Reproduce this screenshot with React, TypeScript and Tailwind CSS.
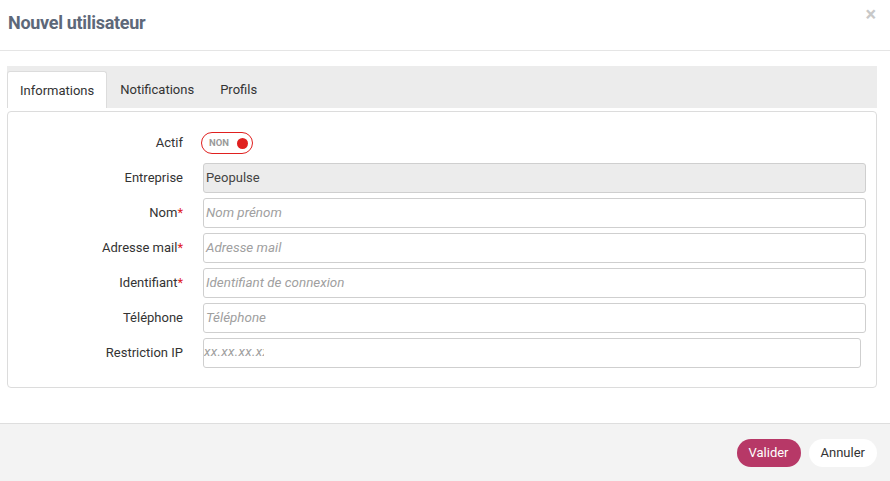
import React, { useState } from 'react';

type Field = {
  label: string;
  required?: boolean;
  placeholder?: string;
  value?: string;
  disabled?: boolean;
};

const fields: Field[] = [
  { label: 'Entreprise', value: 'Peopulse', disabled: true },
  { label: 'Nom', required: true, placeholder: 'Nom prénom' },
  { label: 'Adresse mail', required: true, placeholder: 'Adresse mail' },
  { label: 'Identifiant', required: true, placeholder: 'Identifiant de connexion' },
  { label: 'Téléphone', placeholder: 'Téléphone' },
];

const tabs = ['Informations', 'Notifications', 'Profils'];

const App: React.FC = () => {
  const [activeTab, setActiveTab] = useState('Informations');
  const [actif, setActif] = useState(false);

  return (
    <div className="w-[890px] h-[481px] bg-white flex flex-col text-[#333]" style={{ fontFamily: 'Roboto, "Liberation Sans", sans-serif' }}>
      {/* header */}
      <div className="h-[51px] shrink-0 border-b border-[#e5e5e5] flex items-start justify-between pl-[8px] pr-[14px]">
        <h1 className="mt-[9px] text-[18px] font-bold text-[#5d6879] tracking-[-0.3px]">Nouvel utilisateur</h1>
        <button className="mt-[4px] text-[20px] font-bold leading-none text-[#c8c8c8]">×</button>
      </div>

      {/* body */}
      <div className="flex-1 px-[7px] pt-[15px] pr-[13px]">
        <div className="h-[42px] bg-[#ececec] flex items-end">
          {tabs.map(tab => (
            <button
              key={tab}
              onClick={() => setActiveTab(tab)}
              className={`h-[37px] px-[12px] pt-[1px] text-[13px] text-[#333] ${
                activeTab === tab ? 'bg-white border border-b-0 border-[#dcdcdc] rounded-t-[3px]' : 'border border-transparent'
              }`}
            >
              {tab}
            </button>
          ))}
        </div>

        <div className="mt-[3px] border border-[#dcdcdc] rounded-[4px] pt-[16px] pb-[19px] pr-[10px] flex flex-col gap-[5px]">
          <div className="flex items-center h-[30px]">
            <div className="w-[175px] text-right text-[13px]">Actif</div>
            <div className="ml-[18px]">
              <button
                onClick={() => setActif(!actif)}
                className="w-[52px] h-[22px] rounded-full border border-[#e0201f] flex items-center justify-between pl-[7px] pr-[4px]"
              >
                <span className="text-[9.5px] font-bold text-[#9a9a9a]">{actif ? 'OUI' : 'NON'}</span>
                <span className="w-[11px] h-[11px] rounded-full bg-[#e0201f]" />
              </button>
            </div>
          </div>

          {fields.map(f => (
            <div key={f.label} className="flex items-center h-[30px]">
              <div className="w-[175px] text-right text-[13px]">
                {f.label}
                {f.required && <span className="text-[#e0201f]">*</span>}
              </div>
              <div
                className={`ml-[20px] flex-1 h-[30px] border rounded-[3px] flex items-center px-[2px] ${
                  f.disabled ? 'bg-[#ececec] border-[#cfcfcf] text-[#444] text-[13px]' : 'bg-white border-[#cfcfcf] text-[13.4px]'
                }`}
              >
                {f.value ? <span>{f.value}</span> : <span className="italic text-[#a0a0a0]">{f.placeholder}</span>}
              </div>
            </div>
          ))}

          <div className="flex items-center h-[30px]">
            <div className="w-[175px] text-right text-[13px]">Restriction IP</div>
            <div className="ml-[20px] flex-1 mr-[5px] h-[30px] border border-[#cfcfcf] rounded-[3px] flex items-start pt-[3px]">
              <span className="block w-[60px] overflow-hidden whitespace-nowrap italic text-[13.4px] tracking-[0.3px] text-[#a0a0a0]">xx.xx.xx.xx</span>
            </div>
          </div>
        </div>
      </div>

      {/* footer */}
      <div className="h-[58px] shrink-0 border-t border-[#dedede] bg-[#f3f3f3] flex items-center justify-end gap-[8px] pr-[13px]">
        <button className="h-[28px] px-[12px] rounded-full bg-[#b73867] text-white text-[13px]">Valider</button>
        <button className="h-[28px] px-[12px] rounded-full bg-white text-[#333] text-[13px]">Annuler</button>
      </div>
    </div>
  );
};

export default App;
